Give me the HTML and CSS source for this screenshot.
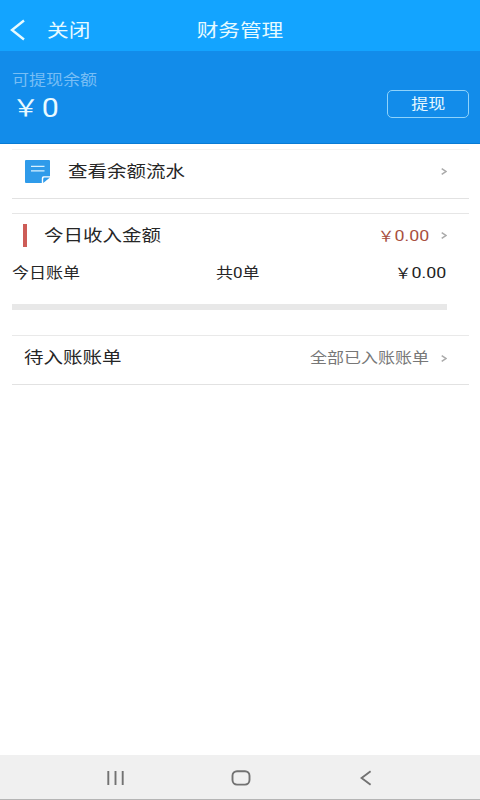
FILE: index.html
```html
<!DOCTYPE html>
<html lang="zh-CN">
<head>
<meta charset="utf-8">
<meta name="viewport" content="width=device-width">
<title>财务管理</title>
<link rel="stylesheet" href="styles.css">
</head>
<body>
<div class="app">
  <header class="topbar">
    <svg class="back" viewBox="0 0 16 22"><path d="M14 1.5 2 11l12 9.5"/></svg>
    <span class="wide close">关闭</span>
    <h1 class="wide center title">财务管理</h1>
  </header>
  <section class="balance">
    <div class="balance-info">
      <div class="wide balance-label">可提现余额</div>
      <div class="wide balance-value"><span class="yen">￥</span><span>0</span></div>
    </div>
    <button class="withdraw"><span class="wide center">提现</span></button>
  </section>
  <main>
    <section class="row flow">
      <svg class="note" viewBox="0 0 25 23"><path class="paper" d="M1 0h23q1 0 1 1v15.2h-6.5q-1.7 0-1.7 1.7V23H1q-1 0-1-1V1q0-1 1-1z"/><path class="fold" d="M18.2 23v-4q0-1.4 1.4-1.4H25z"/><path class="lines" d="M6 6.4h13.5M6 10.8h13.5"/></svg>
      <span class="wide label">查看余额流水</span>
      <svg class="chevron" viewBox="0 0 6 7"><path d="m.7.7 4.2 2.8L.7 6.3"/></svg>
    </section>
    <section class="income">
      <div class="income-head">
        <i class="mark"></i>
        <span class="wide label">今日收入金额</span>
        <span class="wide right amount red"><span class="yen">￥</span>0.00</span>
        <svg class="chevron" viewBox="0 0 6 7"><path d="m.7.7 4.2 2.8L.7 6.3"/></svg>
      </div>
      <div class="bill">
        <span class="wide">今日账单</span>
        <span class="wide count">共0单</span>
        <span class="wide right amount"><span class="yen">￥</span>0.00</span>
      </div>
      <div class="bar"></div>
    </section>
    <section class="row pending">
      <span class="wide label">待入账账单</span>
      <span class="wide right all">全部已入账账单</span>
      <svg class="chevron" viewBox="0 0 6 7"><path d="m.7.7 4.2 2.8L.7 6.3"/></svg>
    </section>
  </main>
  <nav class="navbar">
    <svg viewBox="0 0 20 16"><path d="M2.3 1v14M9.5 1v14M16.7 1v14"/></svg>
    <svg viewBox="0 0 20 16"><rect x="1.5" y="1.2" width="17" height="13.4" rx="4.5"/></svg>
    <svg viewBox="0 0 20 16"><path d="M14.6 1.3 5.6 8l9 6.7"/></svg>
  </nav>
</div>
</body>
</html>
```

FILE: styles.css
```css
* { box-sizing: border-box; }
body {
  margin: 0;
  background: #fff;
  color: #262626;
  font-family: Roboto, "Noto Sans CJK SC", sans-serif;
  font-size: 14.3px;
  line-height: 20px;
}
svg { display: block; flex: none; fill: none; }
.app { display: flex; flex-direction: column; width: 480px; height: 800px; overflow: hidden; }

/* Expanded lettering used across the app */
.wide { display: inline-block; white-space: nowrap; transform: scaleX(1.19); transform-origin: left center; }
.center { transform-origin: center; }
.right { transform-origin: right center; }
.yen { font-family: "Noto Sans CJK SC", sans-serif; }

.topbar {
  display: grid;
  grid-template-columns: 37px 110px 166px 1fr;
  align-items: center;
  height: 51px;
  padding: 10px 0 0 10px;
  background: #13a4ff;
  color: #e6faff;
  font-size: 18.2px;
}
.back { width: 16px; height: 22px; margin-top: -2px; stroke: #e6faff; stroke-width: 2.4; }
.title { margin: 0; font-size: 18.2px; font-weight: 400; text-align: center; }

.balance {
  display: flex;
  justify-content: space-between;
  height: 93px;
  padding: 19px 11px 0 12px;
  background: #128cea;
  border-bottom: 1px solid #087bd4;
}
.balance-info { display: flex; flex-direction: column; align-items: flex-start; }
.balance-label { color: #78bef5; }
.balance-value { display: flex; align-items: center; height: 36px; color: #e9faff; font-size: 25.5px; }
.balance-value .yen { width: 25px; padding-bottom: 4px; font-size: 23px; }
.withdraw {
  width: 82px;
  height: 28px;
  margin-top: 20px;
  padding: 0;
  border: 1.4px solid #8fd3fb;
  border-radius: 5px;
  background: transparent;
  color: #e6f8ff;
  font: inherit;
}

main { flex: 1; padding: 5px 11px 0 12px; }
.label { font-size: 16.4px; }
.row { display: flex; align-items: center; height: 50px; padding-right: 22px; border-top: 1px solid #e9e9e9; border-bottom: 1px solid #e2e2e2; }
.flow { padding-left: 13px; padding-bottom: 5px; border-top-color: #f4f4f4; }
.note { width: 25px; height: 23px; margin-right: 18px; }
.paper, .fold { fill: #2f9bea; }
.lines { stroke: #d8f1ff; stroke-width: 1.3; }
.chevron { width: 6px; height: 7px; margin-left: 12px; stroke: #aaa; stroke-width: 1.5; }
.flow .chevron { margin-left: auto; }

.income { margin-top: 14px; padding-right: 22px; background: linear-gradient(#e6e6e6, #e6e6e6) top / 100% 1px no-repeat; }
.income-head { display: flex; align-items: center; height: 45px; padding-left: 11px; }
.mark { width: 4px; height: 23px; margin-right: 17px; background: #cd5c57; }
.amount { display: flex; align-items: center; margin-left: auto; font-size: 15px; }
.amount .yen { padding-bottom: 2px; font-size: 14px; }
.red { color: #a84f40; }
.bill { display: grid; grid-template-columns: 204px auto 1fr; align-items: center; height: 30px; margin-right: 1px; }
.bill .amount { justify-self: end; color: #222; }
.bar { height: 6px; margin-top: 16px; background: #e8e8e8; }

.pending { margin-top: 25px; padding-left: 12px; padding-bottom: 4px; }
.all { margin-left: auto; color: #777; }

.navbar {
  display: flex;
  justify-content: center;
  gap: 105px;
  height: 45px;
  padding: 15px 0 0 1px;
  background: #f0f0f0;
  border-bottom: 1px solid #b5b5b5;
}
.navbar svg { width: 20px; height: 16px; stroke: #727272; stroke-width: 1.9; }
```
